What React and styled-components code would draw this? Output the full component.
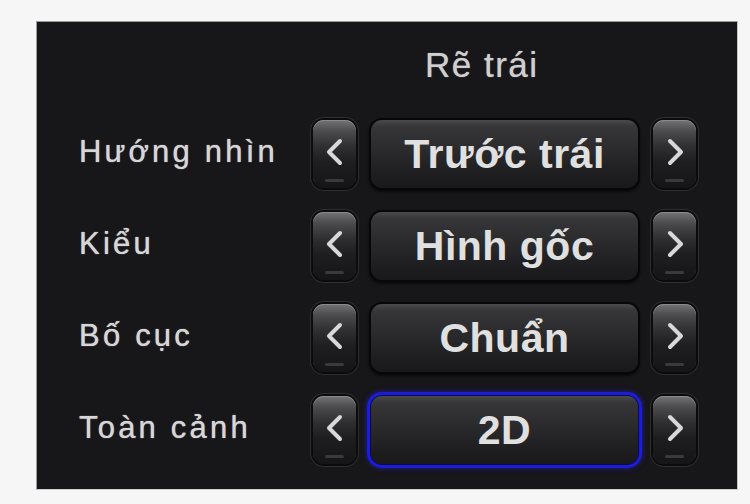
import React from 'react';
import styled, { createGlobalStyle, css } from 'styled-components';

const GlobalStyle = createGlobalStyle`
  html, body {
    margin: 0;
    padding: 0;
    background: #f6f6f6;
  }
  body {
    font-family: "Liberation Sans", Arial, sans-serif;
  }
`;

const Page = styled.div`
  width: 750px;
  height: 504px;
  padding: 21px 12px 0 36px;
  box-sizing: border-box;
`;

const Panel = styled.div`
  width: 702px;
  height: 469px;
  box-sizing: border-box;
  background: #171619;
  border: 1px solid #9a9a9a;
  border-right-color: #c4c4c4;
  border-bottom-color: #d0d0d0;
  padding: 22px 40px 0 43px;
  display: flex;
  flex-direction: column;
`;

const Title = styled.div`
  height: 42px;
  line-height: 42px;
  font-size: 35px;
  letter-spacing: 1.5px;
  color: #cfcfcf;
  text-shadow: 0 0 1px rgba(220, 220, 220, 0.7);
  padding-left: 345px;
  margin-bottom: 33px;
`;

const Rows = styled.div`
  display: flex;
  flex-direction: column;
  gap: 22px;
`;

const Row = styled.div`
  display: grid;
  grid-template-columns: 218px 43px 267px 43px;
  column-gap: 15px;
  align-items: center;
  height: 70px;
`;

const Label = styled.div`
  font-size: 31px;
  letter-spacing: 3.2px;
  color: #d6d6d6;
  text-shadow: 0 0 1px rgba(230, 230, 230, 0.9);
  white-space: nowrap;
  margin-top: -5px;
  margin-left: -1px;
`;

const ArrowButton = styled.div`
  position: relative;
  height: 68px;
  border-radius: 11px;
  display: flex;
  align-items: center;
  justify-content: center;
  padding-bottom: 4px;
  box-sizing: border-box;
  background: linear-gradient(
    to bottom,
    #747476 0%,
    #4c4c4e 16%,
    #303032 38%,
    #1e1e20 62%,
    #151517 100%
  );
  box-shadow: 0 0 0 2px #0b0b0c, 0 0 0 3px #2e2e30, inset 0 1px 0 #8a8a8c;

  &::after {
    content: '';
    position: absolute;
    left: 12px;
    right: 12px;
    bottom: 6px;
    height: 3px;
    border-radius: 2px;
    background: #3a3a3c;
  }
`;

const ValueButton = styled.div`
  height: 68px;
  border-radius: 11px;
  display: flex;
  align-items: center;
  justify-content: center;
  font-size: 41px;
  font-weight: bold;
  color: #e0e0e0;
  letter-spacing: 0.5px;
  background: linear-gradient(
    to bottom,
    #4a4a4c 0%,
    #363638 10%,
    #2a2a2c 45%,
    #1e1e20 80%,
    #19191b 100%
  );
  box-shadow: 0 0 0 2px #070708, 0 2px 3px 2px rgba(0, 0, 0, 0.6);

  ${(p) =>
    p.$active &&
    css`
      box-shadow: 0 0 0 1px #0b0b40, 0 0 0 4px #1c1cdc, 0 0 5px 5px rgba(40, 40, 255, 0.4);
    `}
`;

const Chevron = ({ dir }) => (
  <svg width="22" height="32" viewBox="0 0 22 32">
    <polyline
      points={dir === 'left' ? '16,5 5,16 16,27' : '6,5 17,16 6,27'}
      fill="none"
      stroke="#d8d8d8"
      strokeWidth="4"
      strokeLinecap="round"
      strokeLinejoin="round"
    />
  </svg>
);

const settings = [
  { label: 'Hướng nhìn', value: 'Trước trái' },
  { label: 'Kiểu', value: 'Hình gốc' },
  { label: 'Bố cục', value: 'Chuẩn' },
  { label: 'Toàn cảnh', value: '2D', active: true },
];

export default function App() {
  return (
    <>
      <GlobalStyle />
      <Page>
        <Panel>
          <Title>Rẽ trái</Title>
          <Rows>
            {settings.map((s) => (
              <Row key={s.label}>
                <Label>{s.label}</Label>
                <ArrowButton>
                  <Chevron dir="left" />
                </ArrowButton>
                <ValueButton $active={s.active}>{s.value}</ValueButton>
                <ArrowButton>
                  <Chevron dir="right" />
                </ArrowButton>
              </Row>
            ))}
          </Rows>
        </Panel>
      </Page>
    </>
  );
}
